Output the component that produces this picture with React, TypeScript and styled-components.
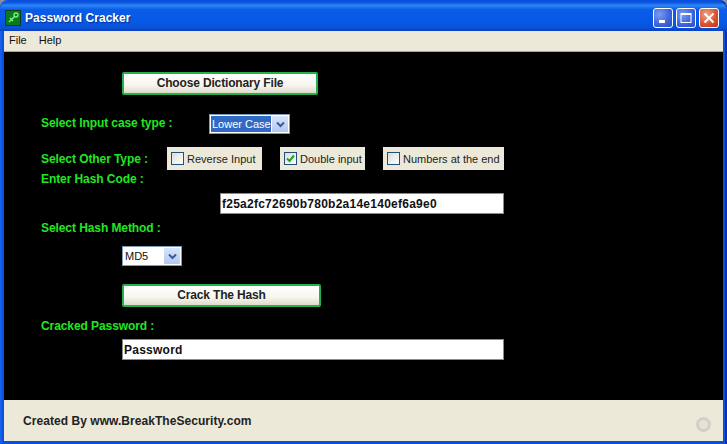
import React from "react";
import styled, { createGlobalStyle } from "styled-components";

const Global = createGlobalStyle`
  html, body { margin: 0; padding: 0; background: #8a8f9c; }
  #root { width: 727px; height: 444px; overflow: hidden; }
`;

const Win = styled.div`
  width: 727px;
  height: 444px;
  box-sizing: border-box;
  display: flex;
  flex-direction: column;
  background: #0a50e0;
  border-radius: 8px 8px 0 0;
  padding: 0 4px 3px 4px;
  box-shadow: inset -2px 0 0 #0a2fb0, inset 2px 0 0 #1660e8;
  font-family: "Liberation Sans", Arial, sans-serif;
`;

const TitleBar = styled.div`
  height: 29px;
  flex: none;
  margin: 2px -4px 0;
  padding: 0 5px;
  box-sizing: border-box;
  display: flex;
  align-items: center;
  gap: 4px;
  border-radius: 8px 8px 0 0;
  background: linear-gradient(180deg, #0a4fd8 0%, #2a86f6 12%, #0b5de8 26%, #0658e6 70%, #0a50d4 90%, #0840c0 100%);
`;

const AppIcon = styled.svg`
  width: 16px;
  height: 16px;
  margin-top: 2px;
  flex: none;
`;

const Title = styled.div`
  flex: 1;
  margin-top: 2px;
  color: #fff;
  font-size: 12px;
  font-weight: 700;
  letter-spacing: 0.05px;
  text-shadow: 1px 1px 1px #0a2f90;
`;

const CapButton = styled.div<{ $close?: boolean }>`
  width: 20px;
  height: 20px;
  box-sizing: border-box;
  border: 1px solid #fff;
  border-radius: 3px;
  display: flex;
  align-items: center;
  justify-content: center;
  background: ${(p) =>
    p.$close
      ? "radial-gradient(circle at 35% 30%, #f0a08a, #d8502e 60%, #b8341a)"
      : "radial-gradient(circle at 30% 30%, #7a9cf0, #3a62dc 60%, #2a4cc4)"};
`;

const Caps = styled.div`
  display: flex;
  gap: 3px;
  margin: 3px 3px 0 0;
`;

const MenuBar = styled.div`
  height: 21px;
  flex: none;
  display: flex;
  align-items: center;
  gap: 12px;
  padding: 0 0 3px 5px;
  box-sizing: border-box;
  background: #ece9d8;
  border-bottom: 1px solid #a8a69a;
  font-size: 11px;
  color: #111;
`;

const Main = styled.div`
  height: 348px;
  flex: none;
  box-sizing: border-box;
  background: #000;
  padding: 20px 0 0 37px;
  display: flex;
  flex-direction: column;
`;

const Row = styled.div<{ $top?: number; $left?: number }>`
  display: flex;
  align-items: center;
  margin-top: ${(p) => p.$top ?? 0}px;
  margin-left: ${(p) => p.$left ?? 0}px;
`;

const Label = styled.div<{ $w?: number; $raise?: number }>`
  color: #22e622;
  font-size: 12px;
  font-weight: 700;
  line-height: 14px;
  letter-spacing: -0.08px;
  white-space: nowrap;
  width: ${(p) => (p.$w ? `${p.$w}px` : "auto")};
  margin-bottom: ${(p) => p.$raise ?? 0}px;
  flex: none;
`;

const ActionButton = styled.div<{ $w: number }>`
  width: ${(p) => p.$w}px;
  height: 23px;
  box-sizing: border-box;
  border: 2px solid #22b24c;
  border-radius: 2px;
  background: linear-gradient(180deg, #ffffff 0%, #f6f5ee 60%, #dedbcb 100%);
  color: #222;
  font-size: 12px;
  font-weight: 700;
  letter-spacing: -0.15px;
  padding-bottom: 1px;
  display: flex;
  align-items: center;
  justify-content: center;
`;

const Select = styled.div<{ $w: number }>`
  width: ${(p) => p.$w}px;
  height: 20px;
  box-sizing: border-box;
  background: #fff;
  border: 1px solid #7f9db9;
  display: flex;
  align-items: center;
  padding: 1px;
  gap: 1px;
  font-size: 11px;
  color: #111;
`;

const SelectValue = styled.div<{ $active?: boolean }>`
  flex: 1;
  height: 100%;
  padding-left: 1px;
  display: flex;
  align-items: center;
  white-space: nowrap;
  background: ${(p) => (p.$active ? "#316ac5" : "#fff")};
  color: ${(p) => (p.$active ? "#fff" : "#111")};
`;

const SelectArrow = styled.div`
  width: 16px;
  height: 16px;
  flex: none;
  background: linear-gradient(180deg, #d8e4fa, #b4c8f0);
  border-radius: 1px;
  display: flex;
  align-items: center;
  justify-content: center;
`;

const Check = styled.div<{ $w: number; $left: number }>`
  width: ${(p) => p.$w}px;
  height: 23px;
  margin-left: ${(p) => p.$left}px;
  flex: none;
  box-sizing: border-box;
  background: #ece9d8;
  display: flex;
  align-items: center;
  padding-left: 4px;
  gap: 3px;
  font-size: 11px;
  color: #222;
  white-space: nowrap;
`;

const Box = styled.div`
  width: 13px;
  height: 13px;
  flex: none;
  box-sizing: border-box;
  border: 1px solid #1c5180;
  background: linear-gradient(135deg, #dcdcd7, #ffffff);
  display: flex;
  align-items: center;
  justify-content: center;
`;

const TextField = styled.div<{ $w: number }>`
  width: ${(p) => p.$w}px;
  height: 21px;
  box-sizing: border-box;
  background: #fff;
  border: 1px solid #8a8a8a;
  padding-left: 1px;
  display: flex;
  align-items: center;
  color: #111;
  font-size: 12px;
  font-weight: 700;
  letter-spacing: 0.25px;
`;

const Footer = styled.div`
  flex: 1;
  box-sizing: border-box;
  background: #ece9d8;
  display: flex;
  align-items: center;
  justify-content: space-between;
  padding: 1px 12px 0 19px;
  font-size: 12px;
  font-weight: 700;
  letter-spacing: 0.05px;
  color: #222;
`;

const Ring = styled.div`
  width: 15px;
  height: 15px;
  margin-top: 6px;
  box-sizing: border-box;
  border-radius: 50%;
  border: 3px solid #d2d0c6;
  background: #e6e3d6;
`;

const Chevron = () => (
  <svg width="9" height="7" viewBox="0 0 9 7">
    <path d="M1 1.5 L4.5 5 L8 1.5" fill="none" stroke="#3a5a9c" strokeWidth="2" />
  </svg>
);

const Tick = () => (
  <svg width="9" height="9" viewBox="0 0 9 9">
    <path d="M1 4.5 L3.5 7 L8 1.5" fill="none" stroke="#21a121" strokeWidth="2" />
  </svg>
);

export default function App() {
  return (
    <>
      <Global />
      <Win>
        <TitleBar>
          <AppIcon viewBox="0 0 16 16">
            <rect width="16" height="16" fill="#0a7a1e" />
            <rect x="0.5" y="0.5" width="15" height="15" fill="none" stroke="#0c3f16" />
            <path d="M4 12 L10 6 M5 8 L8 11" stroke="#7df07d" strokeWidth="1.4" fill="none" />
            <circle cx="11" cy="5" r="2" fill="none" stroke="#7df07d" strokeWidth="1.3" />
          </AppIcon>
          <Title>Password Cracker</Title>
          <Caps>
            <CapButton>
              <svg width="12" height="12" viewBox="0 0 12 12">
                <rect x="2" y="8" width="6" height="3" fill="#fff" />
              </svg>
            </CapButton>
            <CapButton>
              <svg width="12" height="12" viewBox="0 0 12 12">
                <rect x="1" y="1.5" width="10" height="9" fill="none" stroke="#fff" />
                <rect x="1" y="1" width="10" height="2" fill="#fff" />
              </svg>
            </CapButton>
            <CapButton $close>
              <svg width="12" height="12" viewBox="0 0 12 12">
                <path d="M1.5 1.5 L10.5 10.5 M10.5 1.5 L1.5 10.5" stroke="#fff" strokeWidth="2" />
              </svg>
            </CapButton>
          </Caps>
        </TitleBar>
        <MenuBar>
          <span>File</span>
          <span>Help</span>
        </MenuBar>
        <Main>
          <Row $left={81}>
            <ActionButton $w={196}>Choose Dictionary File</ActionButton>
          </Row>
          <Row $top={19}>
            <Label $w={168} $raise={2}>Select Input case type :</Label>
            <Select $w={81}>
              <SelectValue $active>Lower Case</SelectValue>
              <SelectArrow>
                <Chevron />
              </SelectArrow>
            </Select>
          </Row>
          <Row $top={13}>
            <Label $w={126}>Select Other Type :</Label>
            <Check $w={95} $left={0}>
              <Box />
              Reverse Input
            </Check>
            <Check $w={85} $left={18}>
              <Box>
                <Tick />
              </Box>
              Double input
            </Check>
            <Check $w={121} $left={18}>
              <Box />
              Numbers at the end
            </Check>
          </Row>
          <Row $top={2}>
            <Label>Enter Hash Code :</Label>
          </Row>
          <Row $top={7} $left={179}>
            <TextField $w={284}>f25a2fc72690b780b2a14e140ef6a9e0</TextField>
          </Row>
          <Row $top={7}>
            <Label>Select Hash Method :</Label>
          </Row>
          <Row $top={11} $left={81}>
            <Select $w={60}>
              <SelectValue>MD5</SelectValue>
              <SelectArrow>
                <Chevron />
              </SelectArrow>
            </Select>
          </Row>
          <Row $top={18} $left={81}>
            <ActionButton $w={199}>Crack The Hash</ActionButton>
          </Row>
          <Row $top={12}>
            <Label>Cracked Password :</Label>
          </Row>
          <Row $top={6} $left={81}>
            <TextField $w={382}>Password</TextField>
          </Row>
        </Main>
        <Footer>
          <span>Created By www.BreakTheSecurity.com</span>
          <Ring />
        </Footer>
      </Win>
    </>
  );
}
